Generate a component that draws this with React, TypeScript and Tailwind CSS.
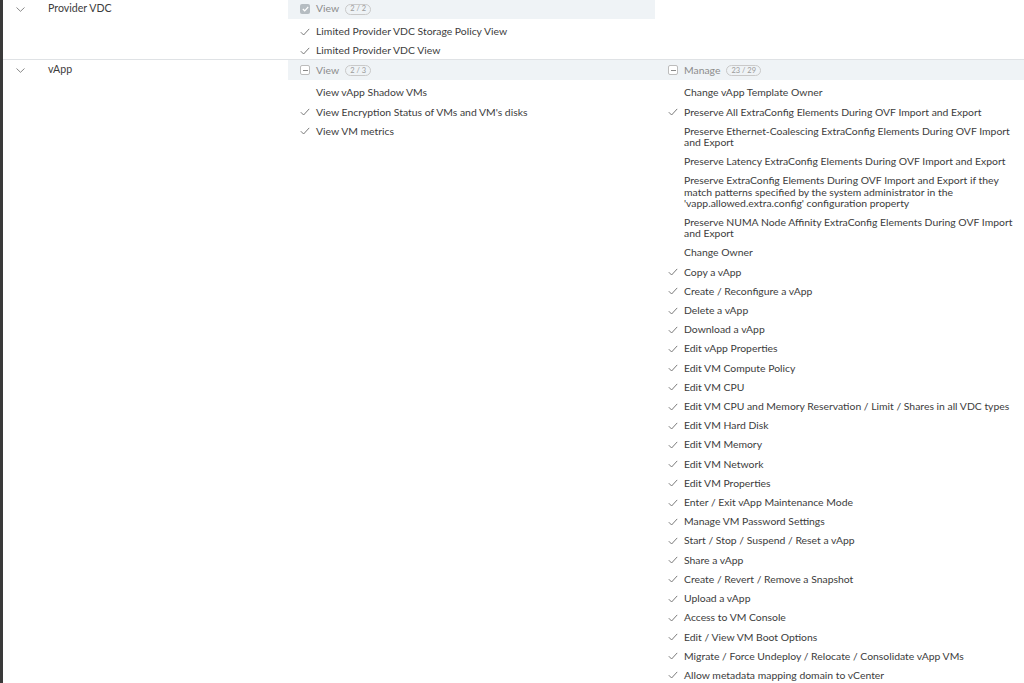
import React from "react";

type Item = { label: string; checked: boolean };

const Check = () => (
  <svg width="10" height="8" viewBox="0 0 10 8" className="shrink-0">
    <path d="M0.8 4.2 L3.6 7 L9.2 0.9" fill="none" stroke="#6b6b6b" strokeWidth="0.9" />
  </svg>
);

const Chevron = () => (
  <svg width="9" height="5" viewBox="0 0 9 5">
    <path d="M0.5 0.5 L4.5 4.3 L8.5 0.5" fill="none" stroke="#7a7a7a" strokeWidth="0.9" />
  </svg>
);

const Badge = ({ text }: { text: string }) => (
  <span className="ml-[6px] inline-flex h-[11px] items-center rounded-full border border-[#c9c9c9] px-[4px] text-[7.5px] leading-none text-[#9a9a9a]">
    {text}
  </span>
);

const BoxChecked = () => (
  <span className="flex h-[10px] w-[10px] items-center justify-center rounded-[2px] bg-[#b5bcc1]">
    <svg width="7" height="6" viewBox="0 0 7 6">
      <path d="M0.8 3 L2.7 4.8 L6.2 1" fill="none" stroke="#fff" strokeWidth="1.2" />
    </svg>
  </span>
);

const BoxIndeterminate = () => (
  <span className="flex h-[10px] w-[10px] items-center justify-center rounded-[2px] border border-[#bcbcbc] bg-white">
    <span className="h-px w-[5px] bg-[#8a8a8a]" />
  </span>
);

const Header = ({ title, badge, full }: { title: string; badge: string; full: boolean }) => (
  <div className="flex h-[20px] items-center bg-[#eff3f6] pl-[12px]">
    <span className="w-[16px]">{full ? <BoxChecked /> : <BoxIndeterminate />}</span>
    <span className="text-[10.4px] text-[#8c8c8c]">{title}</span>
    <Badge text={badge} />
  </div>
);

const ItemList = ({ items }: { items: Item[] }) => (
  <div className="pt-[3px]">
    {items.map((it, i) => (
      <div key={i} className="flex items-start py-[4px] pl-[12px] pr-[3px] text-[10.4px] leading-[11.2px] text-[#3c3c3c]">
        <span className="flex h-[11px] w-[16px] shrink-0 items-center">{it.checked ? <Check /> : null}</span>
        <span>{it.label}</span>
      </div>
    ))}
  </div>
);

const pvdc: Item[] = [
  { label: "Limited Provider VDC Storage Policy View", checked: true },
  { label: "Limited Provider VDC View", checked: true },
];

const vappView: Item[] = [
  { label: "View vApp Shadow VMs", checked: false },
  { label: "View Encryption Status of VMs and VM's disks", checked: true },
  { label: "View VM metrics", checked: true },
];

const vappManage: Item[] = [
  { label: "Change vApp Template Owner", checked: false },
  { label: "Preserve All ExtraConfig Elements During OVF Import and Export", checked: true },
  { label: "Preserve Ethernet-Coalescing ExtraConfig Elements During OVF Import and Export", checked: false },
  { label: "Preserve Latency ExtraConfig Elements During OVF Import and Export", checked: false },
  {
    label:
      "Preserve ExtraConfig Elements During OVF Import and Export if they match patterns specified by the system administrator in the 'vapp.allowed.extra.config' configuration property",
    checked: false,
  },
  { label: "Preserve NUMA Node Affinity ExtraConfig Elements During OVF Import and Export", checked: false },
  { label: "Change Owner", checked: false },
  { label: "Copy a vApp", checked: true },
  { label: "Create / Reconfigure a vApp", checked: true },
  { label: "Delete a vApp", checked: true },
  { label: "Download a vApp", checked: true },
  { label: "Edit vApp Properties", checked: true },
  { label: "Edit VM Compute Policy", checked: true },
  { label: "Edit VM CPU", checked: true },
  { label: "Edit VM CPU and Memory Reservation / Limit / Shares in all VDC types", checked: true },
  { label: "Edit VM Hard Disk", checked: true },
  { label: "Edit VM Memory", checked: true },
  { label: "Edit VM Network", checked: true },
  { label: "Edit VM Properties", checked: true },
  { label: "Enter / Exit vApp Maintenance Mode", checked: true },
  { label: "Manage VM Password Settings", checked: true },
  { label: "Start / Stop / Suspend / Reset a vApp", checked: true },
  { label: "Share a vApp", checked: true },
  { label: "Create / Revert / Remove a Snapshot", checked: true },
  { label: "Upload a vApp", checked: true },
  { label: "Access to VM Console", checked: true },
  { label: "Edit / View VM Boot Options", checked: true },
  { label: "Migrate / Force Undeploy / Relocate / Consolidate vApp VMs", checked: true },
  { label: "Allow metadata mapping domain to vCenter", checked: true },
];

const Category = ({ name }: { name: string }) => (
  <div className="flex h-[20px] w-[285px] shrink-0 items-center">
    <span className="flex w-[45px] justify-start pl-[13px]">
      <Chevron />
    </span>
    <span className="text-[10.6px] text-[#3c3c3c]">{name}</span>
  </div>
);

export default function App() {
  return (
    <div
      className="h-[683px] overflow-hidden border-l-[3px] border-[#3a3a3a] bg-white"
      style={{ fontFamily: "Lato, 'Liberation Sans', sans-serif" }}
    >
      <div className="-mt-px">
        <div className="flex border-b border-[#dfe2e5]">
          <Category name="Provider VDC" />
          <div className="w-[367px] shrink-0">
            <Header title="View" badge="2 / 2" full />
            <div className="-mb-px">
              <ItemList items={pvdc} />
            </div>
          </div>
          <div className="flex-1" />
        </div>
        <div className="flex">
          <Category name="vApp" />
          <div className="w-[368px] shrink-0">
            <Header title="View" badge="2 / 3" full={false} />
            <ItemList items={vappView} />
          </div>
          <div className="flex-1">
            <Header title="Manage" badge="23 / 29" full={false} />
            <ItemList items={vappManage} />
          </div>
        </div>
      </div>
    </div>
  );
}
